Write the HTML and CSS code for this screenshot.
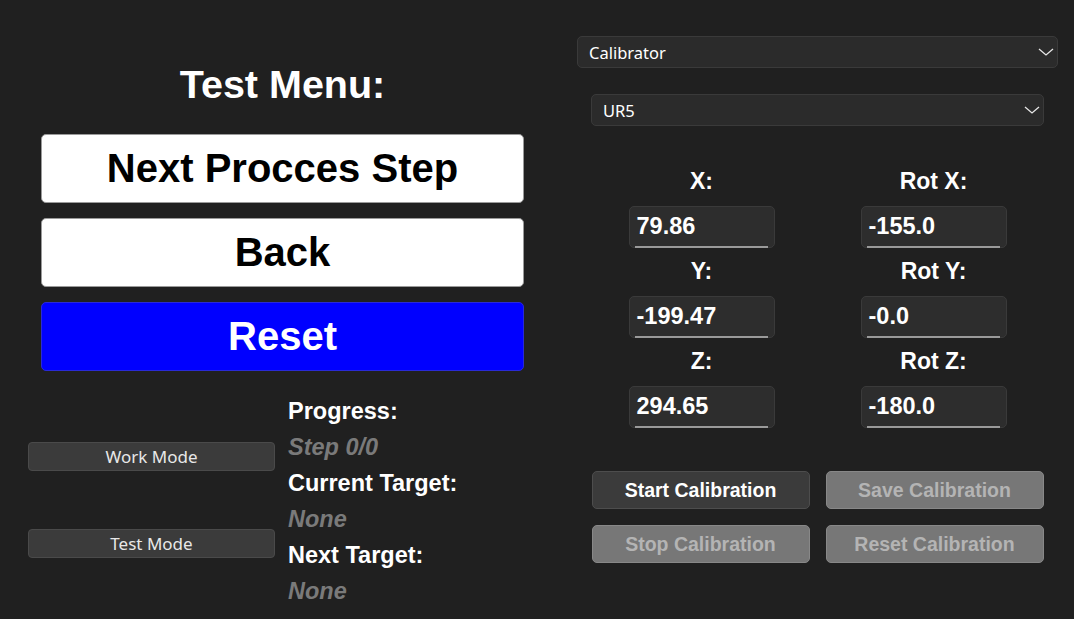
FILE: index.html
```html
<!DOCTYPE html>
<html>
<head>
<meta charset="utf-8">
<link rel="stylesheet" href="styles.css">
</head>
<body>
<div class="app">
  <section class="left">
    <h1 class="title">Test Menu:</h1>
    <div class="actions">
      <button class="big white">Next Procces Step</button>
      <button class="big white">Back</button>
      <button class="big blue">Reset</button>
    </div>
    <div class="status-area">
      <div class="modes">
        <button class="mode">Work Mode</button>
        <button class="mode">Test Mode</button>
      </div>
      <div class="status">
        <div class="lbl">Progress:</div>
        <div class="val">Step 0/0</div>
        <div class="lbl">Current Target:</div>
        <div class="val">None</div>
        <div class="lbl">Next Target:</div>
        <div class="val">None</div>
      </div>
    </div>
  </section>
  <section class="right">
    <div class="select">
      <span>Calibrator</span>
      <svg class="chev" width="16" height="8" viewBox="0 0 16 8"><polyline points="1,1 8,7 15,1" fill="none" stroke="#e6e6e6" stroke-width="1.3"/></svg>
    </div>
    <div class="select sub">
      <span>UR5</span>
      <svg class="chev" width="16" height="8" viewBox="0 0 16 8"><polyline points="1,1 8,7 15,1" fill="none" stroke="#e6e6e6" stroke-width="1.3"/></svg>
    </div>
    <div class="coords">
      <div class="field"><div class="field-label">X:</div><div class="input">79.86</div></div>
      <div class="field"><div class="field-label">Rot X:</div><div class="input">-155.0</div></div>
      <div class="field"><div class="field-label">Y:</div><div class="input">-199.47</div></div>
      <div class="field"><div class="field-label">Rot Y:</div><div class="input">-0.0</div></div>
      <div class="field"><div class="field-label">Z:</div><div class="input">294.65</div></div>
      <div class="field"><div class="field-label">Rot Z:</div><div class="input">-180.0</div></div>
    </div>
    <div class="cal-buttons">
      <button class="cal active">Start Calibration</button>
      <button class="cal disabled">Save Calibration</button>
      <button class="cal disabled">Stop Calibration</button>
      <button class="cal disabled">Reset Calibration</button>
    </div>
  </section>
</div>
</body>
</html>
```
FILE: styles.css
```css
html, body {
  margin: 0;
  padding: 0;
}
body {
  background: #202020;
  color: #ffffff;
  font-family: "Liberation Sans", Arial, sans-serif;
  width: 1074px;
  height: 619px;
  overflow: hidden;
}
button {
  margin: 0;
  padding: 0;
  box-sizing: border-box;
  cursor: default;
}
.app {
  display: flex;
  padding-left: 28px;
}
.left {
  width: 496px;
  padding-top: 61px;
  display: flex;
  flex-direction: column;
}
.title {
  margin: 0 0 27px 13px;
  font-size: 39.5px;
  line-height: 46px;
  font-weight: bold;
  text-align: center;
}
.actions {
  margin-left: 13px;
  display: flex;
  flex-direction: column;
  gap: 15px;
}
.big {
  height: 69px;
  width: 100%;
  border-radius: 5px;
  font-family: "Liberation Sans", Arial, sans-serif;
  font-weight: bold;
  font-size: 40px;
  display: flex;
  align-items: center;
  justify-content: center;
}
.white {
  background: #ffffff;
  border: 1px solid #9a9a9a;
  color: #000000;
}
.blue {
  background: #0000ff;
  border: 1px solid #2a2ad6;
  color: #ffffff;
}
.status-area {
  display: flex;
  margin-top: 22px;
  gap: 13px;
}
.modes {
  width: 247px;
  display: flex;
  flex-direction: column;
  gap: 58px;
  padding-top: 49px;
}
.mode {
  height: 29px;
  width: 100%;
  background: #3b3b3b;
  border: 1px solid #4a4a4a;
  border-radius: 4px;
  color: #e8e8e8;
  font-family: "Noto Sans", "Open Sans", sans-serif;
  font-size: 17px;
  display: flex;
  align-items: center;
  justify-content: center;
}
.status .lbl,
.status .val {
  font-size: 23.5px;
  line-height: 36px;
  font-weight: bold;
  white-space: nowrap;
}
.status .val {
  font-style: italic;
  color: #7a7a7a;
}
.right {
  margin-left: 53px;
  width: 481px;
  padding-top: 36px;
}
.select {
  height: 32px;
  box-sizing: border-box;
  background: #2b2b2b;
  border: 1px solid #3a3a3a;
  border-radius: 5px;
  display: flex;
  align-items: center;
  justify-content: space-between;
  padding: 0 3px 0 11px;
  font-family: "Noto Sans", "Open Sans", sans-serif;
  font-size: 16.5px;
  color: #ffffff;
}
.select.sub {
  margin: 26px 14px 0;
}
.chev {
  display: block;
}
.coords {
  display: grid;
  grid-template-columns: 146px 146px;
  column-gap: 86px;
  row-gap: 8px;
  justify-content: center;
  margin-top: 40px;
}
.field {
  display: flex;
  flex-direction: column;
}
.field-label {
  font-size: 23px;
  line-height: 30px;
  font-weight: bold;
  text-align: center;
  margin-bottom: 10px;
}
.input {
  position: relative;
  height: 42px;
  box-sizing: border-box;
  background: #2d2d2d;
  border: 1px solid #3a3a3a;
  border-radius: 5px;
  padding: 0 0 1px 7px;
  display: flex;
  align-items: center;
  font-size: 23.5px;
  font-weight: bold;
}
.input::after {
  content: "";
  position: absolute;
  left: 5px;
  right: 6px;
  bottom: -1px;
  height: 2px;
  background: #9a9a9a;
}
.cal-buttons {
  display: grid;
  grid-template-columns: 218px 218px;
  gap: 16px;
  justify-content: center;
  margin-top: 43px;
}
.cal {
  height: 38px;
  border-radius: 5px;
  font-family: "Liberation Sans", Arial, sans-serif;
  font-weight: bold;
  font-size: 19.5px;
  display: flex;
  align-items: center;
  justify-content: center;
}
.cal.active {
  background: #3b3b3b;
  border: 1px solid #4d4d4d;
  color: #ffffff;
}
.cal.disabled {
  background: #777777;
  border: 1px solid #888888;
  color: #b4b4b4;
}
```
